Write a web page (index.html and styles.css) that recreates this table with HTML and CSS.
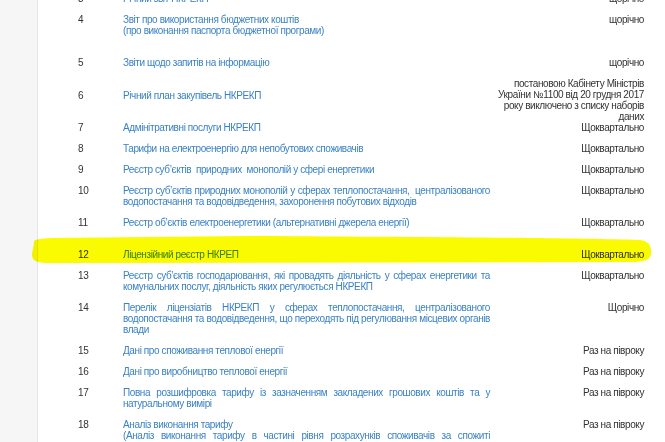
FILE: index.html
```html
<!DOCTYPE html>
<html lang="uk">
<head>
    <meta charset="UTF-8">
    <meta name="viewport" content="width=device-width, initial-scale=1.0">
    <title>Набори даних НКРЕКП</title>
    <link rel="stylesheet" href="styles.css">
</head>
<body>
    <div class="page">
        <div class="sidebar"></div>
        <div class="content">
            <table class="datasets">
                <tr>
                    <td class="num">3</td>
                    <td class="title"><a href="#">Річний звіт НКРЕКП</a></td>
                    <td class="period">щорічно</td>
                </tr>
                <tr class="tall">
                    <td class="num">4</td>
                    <td class="title"><a href="#">Звіт про використання бюджетних коштів<br>(про виконання паспорта бюджетної програми)</a></td>
                    <td class="period">щорічно</td>
                </tr>
                <tr>
                    <td class="num">5</td>
                    <td class="title"><a href="#">Звіти щодо запитів на інформацію</a></td>
                    <td class="period">щорічно</td>
                </tr>
                <tr class="middle">
                    <td class="num">6</td>
                    <td class="title"><a href="#">Річний план закупівель НКРЕКП</a></td>
                    <td class="period note">постановою Кабінету Міністрів України №1100 від 20 грудня 2017 року виключено з списку наборів даних</td>
                </tr>
                <tr>
                    <td class="num">7</td>
                    <td class="title"><a href="#">Адмінітративні послуги НКРЕКП</a></td>
                    <td class="period">Щоквартально</td>
                </tr>
                <tr>
                    <td class="num">8</td>
                    <td class="title"><a href="#">Тарифи на електроенергію для непобутових споживачів</a></td>
                    <td class="period">Щоквартально</td>
                </tr>
                <tr>
                    <td class="num">9</td>
                    <td class="title"><a href="#">Реєстр суб’єктів &nbsp;природних &nbsp;монополій у сфері енергетики</a></td>
                    <td class="period">Щоквартально</td>
                </tr>
                <tr>
                    <td class="num">10</td>
                    <td class="title"><a href="#">Реєстр суб’єктів природних монополій у сферах теплопостачання, &nbsp;централізованого водопостачання та водовідведення, захоронення побутових відходів</a></td>
                    <td class="period">Щоквартально</td>
                </tr>
                <tr class="tall">
                    <td class="num">11</td>
                    <td class="title"><a href="#">Реєстр об’єктів електроенергетики (альтернативні джерела енергії)</a></td>
                    <td class="period">Щоквартально</td>
                </tr>
                <tr>
                    <td class="num">12</td>
                    <td class="title"><a href="#">Ліцензійний реєстр НКРЕП</a></td>
                    <td class="period">Щоквартально</td>
                </tr>
                <tr>
                    <td class="num">13</td>
                    <td class="title"><a href="#">Реєстр суб’єктів господарювання, які провадять діяльність у сферах енергетики та комунальних послуг, діяльність яких регулюється НКРЕКП</a></td>
                    <td class="period">Щоквартально</td>
                </tr>
                <tr>
                    <td class="num">14</td>
                    <td class="title"><a href="#">Перелік ліцензіатів НКРЕКП у сферах теплопостачання, централізованого водопостачання та водовідведення, що переходять під регулювання місцевих органів влади</a></td>
                    <td class="period">Щорічно</td>
                </tr>
                <tr>
                    <td class="num">15</td>
                    <td class="title"><a href="#">Дані про споживання теплової енергії</a></td>
                    <td class="period">Раз на півроку</td>
                </tr>
                <tr>
                    <td class="num">16</td>
                    <td class="title"><a href="#">Дані про виробництво теплової енергії</a></td>
                    <td class="period">Раз на півроку</td>
                </tr>
                <tr>
                    <td class="num">17</td>
                    <td class="title"><a href="#">Повна розшифровка тарифу із зазначенням закладених грошових коштів та у натуральному вимірі</a></td>
                    <td class="period">Раз на півроку</td>
                </tr>
                <tr>
                    <td class="num">18</td>
                    <td class="title"><a href="#">Аналіз виконання тарифу<br>(Аналіз виконання тарифу в частині рівня розрахунків споживачів за спожиті комунальні послуги з централізованого водопостачання та водовідведення за 2019 рік)</a></td>
                    <td class="period">Раз на півроку</td>
                </tr>
            </table>
        </div>

        <!-- marker highlight over row 12 -->
        <svg class="marker" width="626" height="34" viewBox="0 0 626 34">
            <path d="M4 9 C3 5 9 5 22 4 L220 2 C400 3 540 4 610 6 C619 7 622 13 621 20 C620 26 615 28 600 28 L20 29 C6 29 2 27 2 20 Z"/>
        </svg>
    </div>
</body>
</html>
```

FILE: styles.css
```css
body {
    margin: 0;
    font-family: "Liberation Sans", Arial, sans-serif;
    font-size: 10px;
    letter-spacing: -0.4px;
    color: #333;
    background-color: #fff;
}
.page {
    position: relative;
    display: flex;
    height: 442px;
    overflow: hidden;
}
.sidebar {
    width: 37px;
    flex-shrink: 0;
    background-color: #f6f6f6;
    border-right: 1px solid #e6e6e6;
}
.content {
    flex: 1;
    padding-left: 40px;
}
.datasets {
    border-collapse: collapse;
    margin-top: -7px;
    line-height: 11px;
}
.datasets td {
    padding: 0 0 10px 0;
    vertical-align: top;
}
.datasets .num {
    width: 45px;
}
.datasets .title {
    width: 367px;
    text-align: justify;
}
.datasets .period {
    width: 150px;
    padding-left: 4px;
    text-align: right;
}
.datasets .note {
    padding-bottom: 0;
}
.datasets tr.middle td {
    vertical-align: middle;
}
.datasets tr.tall .title {
    padding-bottom: 21px;
}
.datasets a {
    color: #3a82c4;
    text-decoration: none;
}
.marker {
    position: absolute;
    left: 30px;
    top: 234px;
    mix-blend-mode: multiply;
}
.marker path {
    fill: #fafa00;
}
```
